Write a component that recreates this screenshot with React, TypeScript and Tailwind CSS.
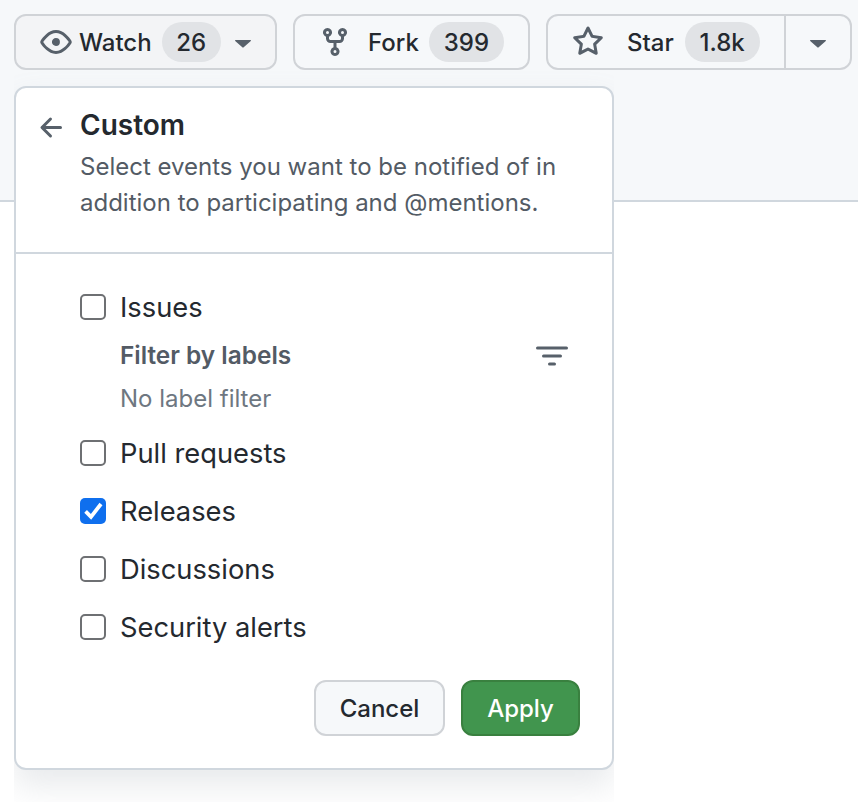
const eyePath =
  "M8 2c1.981 0 3.671.992 4.933 2.078 1.27 1.091 2.187 2.345 2.637 3.023a1.62 1.62 0 0 1 0 1.798c-.45.678-1.367 1.932-2.637 3.023C11.67 13.008 9.981 14 8 14c-1.981 0-3.671-.992-4.933-2.078C1.797 10.83.88 9.576.43 8.898a1.62 1.62 0 0 1 0-1.798c.45-.677 1.367-1.931 2.637-3.022C4.33 2.992 6.019 2 8 2ZM1.679 7.932a.12.12 0 0 0 0 .136c.411.622 1.241 1.75 2.366 2.717C5.176 11.758 6.527 12.5 8 12.5c1.473 0 2.825-.742 3.955-1.715 1.124-.967 1.954-2.096 2.366-2.717a.12.12 0 0 0 0-.136c-.412-.621-1.242-1.75-2.366-2.717C10.824 4.242 9.473 3.5 8 3.5c-1.473 0-2.825.742-3.955 1.715-1.124.967-1.954 2.096-2.366 2.717ZM8 10a2 2 0 1 1-.001-3.999A2 2 0 0 1 8 10Z";
const forkPath =
  "M5 5.372v.878c0 .414.336.75.75.75h4.5a.75.75 0 0 0 .75-.75v-.878a2.25 2.25 0 1 1 1.5 0v.878a2.25 2.25 0 0 1-2.25 2.25h-1.5v2.128a2.251 2.251 0 1 1-1.5 0V8.5h-1.5A2.25 2.25 0 0 1 3.5 6.25v-.878a2.25 2.25 0 1 1 1.5 0ZM5 3.25a.75.75 0 1 0-1.5 0 .75.75 0 0 0 1.5 0Zm6.75.75a.75.75 0 1 0 0-1.5.75.75 0 0 0 0 1.5Zm-3 8.75a.75.75 0 1 0-1.5 0 .75.75 0 0 0 1.5 0Z";
const starPath =
  "M8 .25a.75.75 0 0 1 .673.418l1.882 3.815 4.21.612a.75.75 0 0 1 .416 1.279l-3.046 2.97.719 4.192a.751.751 0 0 1-1.088.791L8 12.347l-3.766 1.98a.75.75 0 0 1-1.088-.79l.72-4.194L.818 6.374a.75.75 0 0 1 .416-1.28l4.21-.611L7.327.668A.75.75 0 0 1 8 .25Zm0 2.445L6.615 5.5a.75.75 0 0 1-.564.41l-3.097.45 2.24 2.184a.75.75 0 0 1 .216.664l-.528 3.084 2.769-1.456a.75.75 0 0 1 .698 0l2.77 1.456-.53-3.084a.75.75 0 0 1 .216-.664l2.24-2.183-3.096-.45a.75.75 0 0 1-.564-.41L8 2.694Z";
const arrowPath =
  "M7.78 12.53a.75.75 0 0 1-1.06 0L2.47 8.28a.75.75 0 0 1 0-1.06l4.25-4.25a.751.751 0 0 1 1.042.018.751.751 0 0 1 .018 1.042L4.81 7h7.44a.75.75 0 0 1 0 1.5H4.81l2.97 2.97a.75.75 0 0 1 0 1.06Z";

function Octicon({ d, className }: { d: string; className: string }) {
  return (
    <svg viewBox="0 0 16 16" fill="#57606a" className={className}>
      <path d={d} />
    </svg>
  );
}

function Caret() {
  return (
    <svg viewBox="0 0 16 8" fill="#57606a" className="h-[8px] w-[16px] shrink-0">
      <path d="M0.6 0h14.8c.5 0 .8.6.4 1L8.4 7.6c-.2.2-.6.2-.8 0L.2 1C-.2.6.1 0 .6 0Z" />
    </svg>
  );
}

function Counter({ children, className }: { children: string; className: string }) {
  return (
    <span
      className={`flex h-[40px] shrink-0 items-center justify-center rounded-full bg-[#e1e3e6] pt-[2px] text-[24px] font-medium text-[#24292f] ${className}`}
    >
      {children}
    </span>
  );
}

const events = [
  { label: "Pull requests", checked: false },
  { label: "Releases", checked: true },
  { label: "Discussions", checked: false },
  { label: "Security alerts", checked: false },
];

function Checkbox({ checked }: { checked: boolean }) {
  if (checked) {
    return (
      <span className="-mt-[2px] h-[26px] w-[26px] shrink-0 rounded-[5px] bg-[#0f6fee]">
        <svg viewBox="0 0 26 26" fill="none" stroke="#fff" strokeWidth="3.8" className="h-[26px] w-[26px]">
          <path d="M5.6 13.4l5.4 5.4 10-12.8" />
        </svg>
      </span>
    );
  }
  return <span className="-mt-[2px] h-[26px] w-[26px] shrink-0 rounded-[5px] border-2 border-[#6e7073] bg-white" />;
}

export default function App() {
  return (
    <div className="relative h-[812px] w-[858px] overflow-hidden bg-white font-['Inter',sans-serif] text-[#24292f]">
      <div className="h-[202px] border-b-2 border-[#d0d7de] bg-[#f6f8fa] pl-[14px] pt-[14px]">
        <div className="flex gap-[16px]">
          <div className="flex h-[56px] w-[263px] items-center rounded-[12px] border-2 border-[#d0d3d7] bg-[#f3f4f6] pl-[24px]">
            <Octicon d={eyePath} className="h-[32px] w-[32px] shrink-0" />
            <span className="ml-[7px] pt-[2px] text-[24px] font-medium">Watch</span>
            <Counter className="ml-[10px] w-[59px]">26</Counter>
            <span className="ml-[14px] mt-[3px]">
              <Caret />
            </span>
          </div>
          <div className="flex h-[56px] w-[237px] items-center rounded-[12px] border-2 border-[#d0d3d7] bg-[#f6f8fa] pl-[24px]">
            <Octicon d={forkPath} className="h-[32px] w-[32px] shrink-0" />
            <span className="ml-[17px] pt-[2px] text-[24px] font-medium">Fork</span>
            <Counter className="ml-[10px] w-[75px]">399</Counter>
          </div>
          <div className="flex h-[56px] w-[306px] items-center rounded-[12px] border-2 border-[#d0d3d7] bg-[#f6f8fa]">
            <div className="flex flex-1 items-center pl-[24px]">
              <Octicon d={starPath} className="h-[32px] w-[32px] shrink-0" />
              <span className="ml-[23px] pt-[2px] text-[24px] font-medium">Star</span>
              <Counter className="ml-[11px] w-[75px]">1.8k</Counter>
            </div>
            <div className="flex h-full w-[66px] items-center justify-center border-l-2 border-[#d0d3d7] pt-[3px]">
              <Caret />
            </div>
          </div>
        </div>
      </div>

      {/* shadow is cut off at the edges of this box, same as the capture */}
      <div className="absolute left-[14px] top-[70px] h-[732px] w-[600px] overflow-hidden">
        <div className="mt-[16px] flex h-[684px] flex-col rounded-[12px] border-2 border-[#d0d7de] bg-white shadow-[0_16px_32px_rgba(140,149,159,0.2)]">
          <div className="flex h-[166px] shrink-0 border-b-2 border-[#d0d7de] pl-[20px] pt-[19px]">
            <Octicon d={arrowPath} className="mt-[5px] h-[32px] w-[32px] shrink-0" />
            <div className="ml-[12px]">
              <div className="text-[28px] font-semibold leading-[36px]">Custom</div>
              <div className="mt-[6px] text-[24px] leading-[36px] text-[#535b65]">
                Select events you want to be notified of in
                <br />
                addition to participating and @mentions.
              </div>
            </div>
          </div>

          <div className="flex flex-col pl-[64px] pr-[44px] pt-[36px]">
            <label className="flex h-[36px] items-center gap-[14px] text-[27.3px]">
              <Checkbox checked={false} />
              Issues
            </label>
            <div className="ml-[40px] mt-[11px] flex items-center justify-between">
              <span className="text-[24.4px] font-semibold leading-[36px] text-[#535b65]">Filter by labels</span>
              <svg viewBox="0 0 32 20" className="mt-[2px] h-[20px] w-[32px]" fill="#57606a">
                <rect x="0" y="0.5" width="32" height="3" rx="1.5" />
                <rect x="6" y="8.5" width="20" height="3" rx="1.5" />
                <rect x="12" y="16.5" width="8" height="3" rx="1.5" />
              </svg>
            </div>
            <div className="ml-[40px] mt-[8px] text-[24px] leading-[36px] text-[#6e7781]">No label filter</div>
            <div className="mt-[8px] flex flex-col">
              {events.map((event) => (
                <label key={event.label} className="flex h-[58px] items-center gap-[14px] text-[27.3px]">
                  <Checkbox checked={event.checked} />
                  {event.label}
                </label>
              ))}
            </div>
          </div>

          <div className="mt-auto flex justify-end gap-[16px] pb-[32px] pr-[32px]">
            <button className="flex h-[56px] w-[131px] items-center justify-center rounded-[12px] border-2 border-[#d0d3d7] bg-[#f6f8fa] pt-[2px] text-[24px] font-medium">
              Cancel
            </button>
            <button className="flex h-[56px] w-[119px] items-center justify-center rounded-[12px] border-2 border-[#39803f] bg-[#41954e] pt-[2px] text-[24px] font-medium text-white">
              Apply
            </button>
          </div>
        </div>
      </div>
    </div>
  );
}
